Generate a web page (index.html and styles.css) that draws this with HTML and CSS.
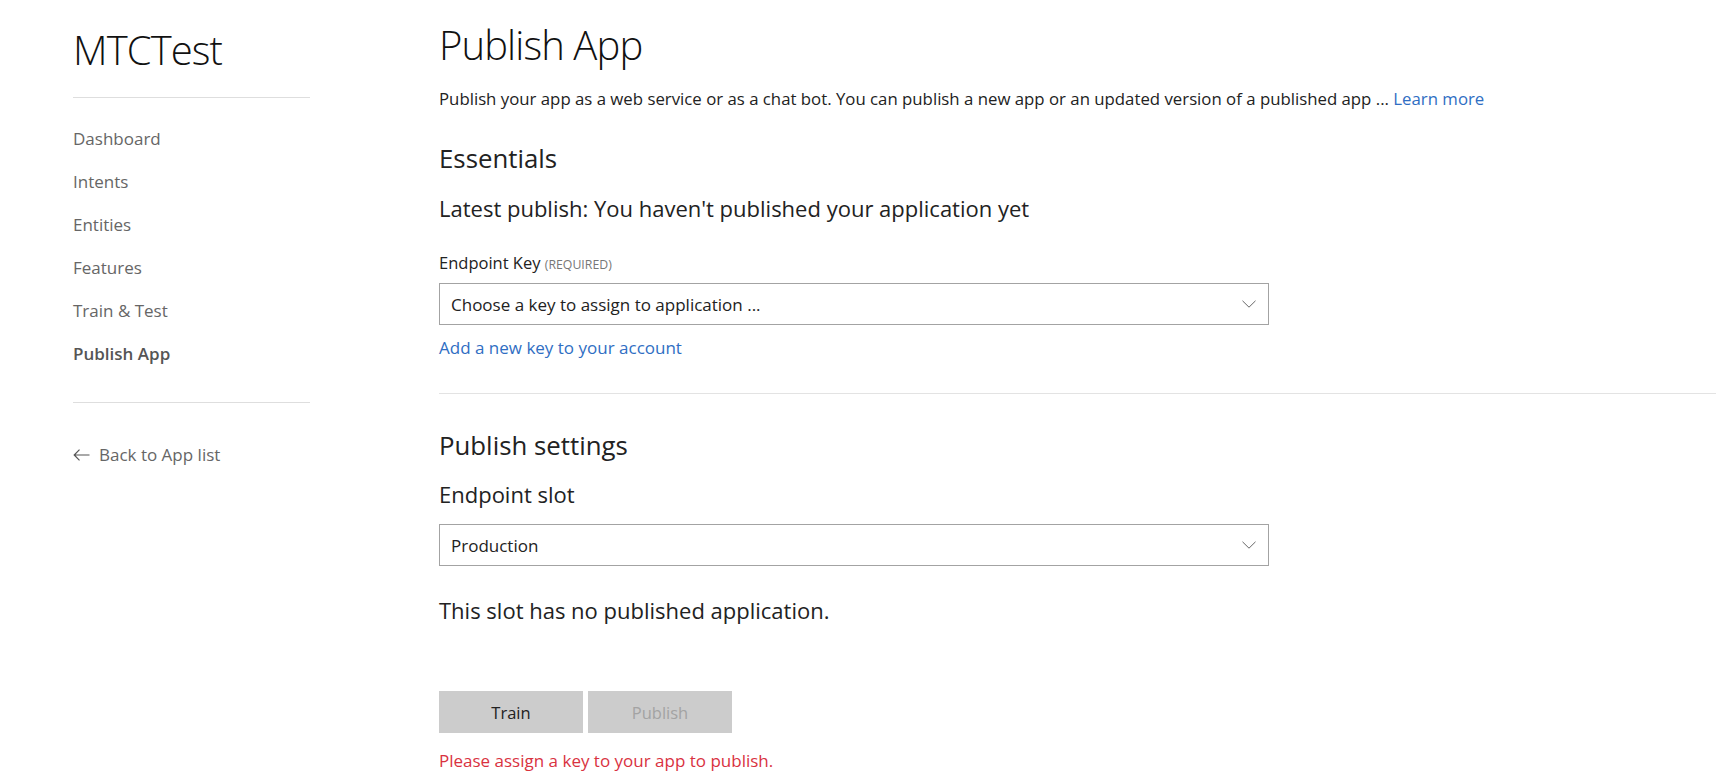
FILE: index.html
```html
<!DOCTYPE html>
<html lang="en">
<head>
<meta charset="utf-8">
<title>Publish App</title>
<link rel="stylesheet" href="styles.css">
</head>
<body>
<div class="app">
  <aside class="sidebar">
    <div class="app-name">MTCTest</div>
    <hr class="side-rule">
    <nav class="nav">
      <a class="nav-item">Dashboard</a>
      <a class="nav-item">Intents</a>
      <a class="nav-item">Entities</a>
      <a class="nav-item">Features</a>
      <a class="nav-item">Train &amp; Test</a>
      <a class="nav-item active">Publish App</a>
    </nav>
    <hr class="side-rule second">
    <a class="back">
      <svg class="back-icon" width="17" height="12" viewBox="0 0 17 12"><path d="M16.5 6H1.2M6.5 0.7L1.2 6l5.3 5.3" fill="none" stroke="#555" stroke-width="1.2"/></svg>
      <span>Back to App list</span>
    </a>
  </aside>
  <main class="main">
    <h1 class="page-title">Publish App</h1>
    <p class="intro">Publish your app as a web service or as a chat bot. You can publish a new app or an updated version of a published app ... <a class="link">Learn more</a></p>
    <h2 class="section-title">Essentials</h2>
    <div class="subhead">Latest publish: You haven't published your application yet</div>
    <div class="field-label">Endpoint Key <span class="req">(REQUIRED)</span></div>
    <div class="select">
      <span>Choose a key to assign to application ...</span>
      <svg class="chev" width="14" height="8" viewBox="0 0 14 8"><path d="M0.5 0.8L7 7.2l6.5-6.4" fill="none" stroke="#666" stroke-width="1"/></svg>
    </div>
    <a class="link add-key">Add a new key to your account</a>
    <hr class="main-rule">
    <h2 class="section-title settings">Publish settings</h2>
    <div class="subhead slot-label">Endpoint slot</div>
    <div class="select slot-select">
      <span>Production</span>
      <svg class="chev" width="14" height="8" viewBox="0 0 14 8"><path d="M0.5 0.8L7 7.2l6.5-6.4" fill="none" stroke="#666" stroke-width="1"/></svg>
    </div>
    <div class="subhead status">This slot has no published application.</div>
    <div class="actions">
      <button class="btn">Train</button>
      <button class="btn disabled">Publish</button>
    </div>
    <div class="error">Please assign a key to your app to publish.</div>
  </main>
</div>
</body>
</html>
```
FILE: styles.css
```css
html, body {
  margin: 0;
  padding: 0;
  background: #fff;
}
body {
  font-family: "Open Sans", "Noto Sans", sans-serif;
  color: #222;
  overflow: hidden;
}
.app {
  display: flex;
  align-items: flex-start;
}
.sidebar {
  width: 237px;
  margin-left: 73px;
  flex: none;
}
.app-name {
  font-size: 40px;
  font-weight: 300;
  line-height: 42px;
  padding-top: 29px;
  color: #111;
  letter-spacing: -0.9px;
}
.side-rule {
  border: 0;
  border-top: 1px solid #dedede;
  margin: 26px 0 0;
}
.side-rule.second {
  margin-top: 27px;
}
.nav {
  display: flex;
  flex-direction: column;
  margin-top: 19px;
}
.nav-item {
  font-size: 17px;
  line-height: 43px;
  color: #666;
}
.nav-item.active {
  font-weight: 600;
  color: #555;
}
.back {
  display: flex;
  align-items: center;
  gap: 9px;
  margin-top: 30px;
  font-size: 17px;
  line-height: 43px;
  color: #666;
}
.main {
  flex: 1;
  margin-left: 129px;
  padding-top: 20px;
}
.page-title {
  margin: 0;
  font-size: 40px;
  font-weight: 300;
  line-height: 50px;
  color: #111;
  letter-spacing: -0.9px;
}
.intro {
  margin: 17px 0 0;
  font-size: 16.8px;
  line-height: 24px;
  color: #222;
}
.link {
  color: #2f6ec3;
}
.section-title {
  margin: 30px 0 0;
  font-size: 25.8px;
  font-weight: 400;
  line-height: 34px;
  color: #222;
}
.subhead {
  margin-top: 18px;
  font-size: 22px;
  line-height: 30px;
  color: #222;
}
.field-label {
  margin-top: 29px;
  font-size: 16.5px;
  line-height: 22px;
  color: #222;
}
.req {
  font-size: 12.3px;
  color: #777;
}
.select {
  margin-top: 7px;
  width: 830px;
  height: 42px;
  box-sizing: border-box;
  border: 1px solid #a3a3a3;
  display: flex;
  align-items: center;
  justify-content: space-between;
  padding: 0 12px 0 11px;
  font-size: 17px;
  color: #222;
}
.chev {
  display: block;
}
.add-key {
  display: block;
  margin-top: 12px;
  font-size: 17px;
  line-height: 22px;
}
.main-rule {
  border: 0;
  border-top: 1px solid #e3e3e3;
  margin: 34px 0 0;
}
.section-title.settings {
  margin-top: 34px;
}
.slot-label {
  margin-top: 17px;
}
.slot-select {
  margin-top: 15px;
}
.status {
  margin-top: 29px;
}
.actions {
  display: flex;
  gap: 5px;
  margin-top: 66px;
}
.btn {
  width: 144px;
  height: 42px;
  border: 0;
  background: #cccccc;
  font-family: inherit;
  font-size: 16.5px;
  color: #222;
  padding: 0;
}
.btn.disabled {
  color: #a3a3a3;
}
.error {
  margin-top: 17px;
  font-size: 17px;
  line-height: 22px;
  color: #d9323f;
}
```
